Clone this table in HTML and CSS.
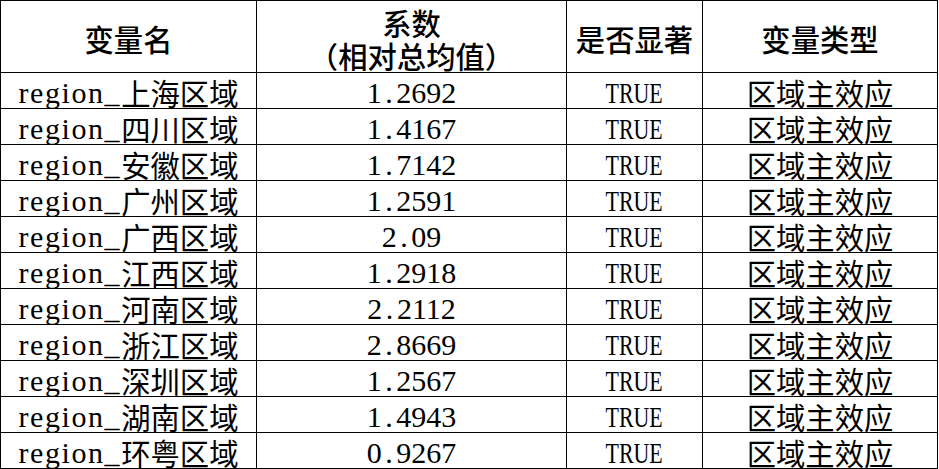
FILE: index.html
```html
<!DOCTYPE html>
<html>
<head>
<meta charset="utf-8">
<title>区域主效应</title>
<link rel="stylesheet" href="styles.css">
</head>
<body>
<table class="coef">
  <colgroup>
    <col class="c1"><col class="c2"><col class="c3"><col class="c4">
  </colgroup>
  <thead>
    <tr><th>变量名</th><th>系数<br>（相对总均值）</th><th>是否显著</th><th>变量类型</th></tr>
  </thead>
  <tbody>
    <tr><td><span class="lat">region_</span>上海区域</td><td><span class="num">1<span class="dot">.</span>2692</span></td><td><span class="flag">TRUE</span></td><td>区域主效应</td></tr>
    <tr><td><span class="lat">region_</span>四川区域</td><td><span class="num">1<span class="dot">.</span>4167</span></td><td><span class="flag">TRUE</span></td><td>区域主效应</td></tr>
    <tr><td><span class="lat">region_</span>安徽区域</td><td><span class="num">1<span class="dot">.</span>7142</span></td><td><span class="flag">TRUE</span></td><td>区域主效应</td></tr>
    <tr><td><span class="lat">region_</span>广州区域</td><td><span class="num">1<span class="dot">.</span>2591</span></td><td><span class="flag">TRUE</span></td><td>区域主效应</td></tr>
    <tr><td><span class="lat">region_</span>广西区域</td><td><span class="num">2<span class="dot">.</span>09</span></td><td><span class="flag">TRUE</span></td><td>区域主效应</td></tr>
    <tr><td><span class="lat">region_</span>江西区域</td><td><span class="num">1<span class="dot">.</span>2918</span></td><td><span class="flag">TRUE</span></td><td>区域主效应</td></tr>
    <tr><td><span class="lat">region_</span>河南区域</td><td><span class="num">2<span class="dot">.</span>2112</span></td><td><span class="flag">TRUE</span></td><td>区域主效应</td></tr>
    <tr><td><span class="lat">region_</span>浙江区域</td><td><span class="num">2<span class="dot">.</span>8669</span></td><td><span class="flag">TRUE</span></td><td>区域主效应</td></tr>
    <tr><td><span class="lat">region_</span>深圳区域</td><td><span class="num">1<span class="dot">.</span>2567</span></td><td><span class="flag">TRUE</span></td><td>区域主效应</td></tr>
    <tr><td><span class="lat">region_</span>湖南区域</td><td><span class="num">1<span class="dot">.</span>4943</span></td><td><span class="flag">TRUE</span></td><td>区域主效应</td></tr>
    <tr><td><span class="lat">region_</span>环粤区域</td><td><span class="num">0<span class="dot">.</span>9267</span></td><td><span class="flag">TRUE</span></td><td>区域主效应</td></tr>
  </tbody>
</table>
</body>
</html>
```

FILE: styles.css
```css
html, body {
  margin: 0;
  padding: 0;
  background: #fff;
}

.coef {
  border-collapse: collapse;
  table-layout: fixed;
  width: 937px;
  font-family: "Noto Sans CJK SC", sans-serif;
  font-size: 29.33px;
  color: #000;
}

.c1 { width: 256px; }
.c2 { width: 310px; }
.c3 { width: 136px; }
.c4 { width: 235px; }

.coef th,
.coef td {
  border: 1px solid #000;
  padding: 0;
  text-align: center;
  vertical-align: middle;
  white-space: nowrap;
}

.coef th {
  height: 72px;
  font-weight: 500;
  line-height: 33px;
  padding-top: 4px;
  box-sizing: border-box;
}

.coef td {
  height: 36px;
  line-height: 26px;
  padding-top: 3px;
  box-sizing: border-box;
}

.lat,
.num,
.flag {
  font-family: "Liberation Serif", "Times New Roman", serif;
  font-size: 30px;
  line-height: 1px;
  vertical-align: 2px;
}

.lat {
  letter-spacing: 1.58px;
}

.dot {
  padding: 0 3.6px;
  vertical-align: baseline;
}

.flag {
  display: inline-block;
  transform: scaleX(0.73);
}
```
